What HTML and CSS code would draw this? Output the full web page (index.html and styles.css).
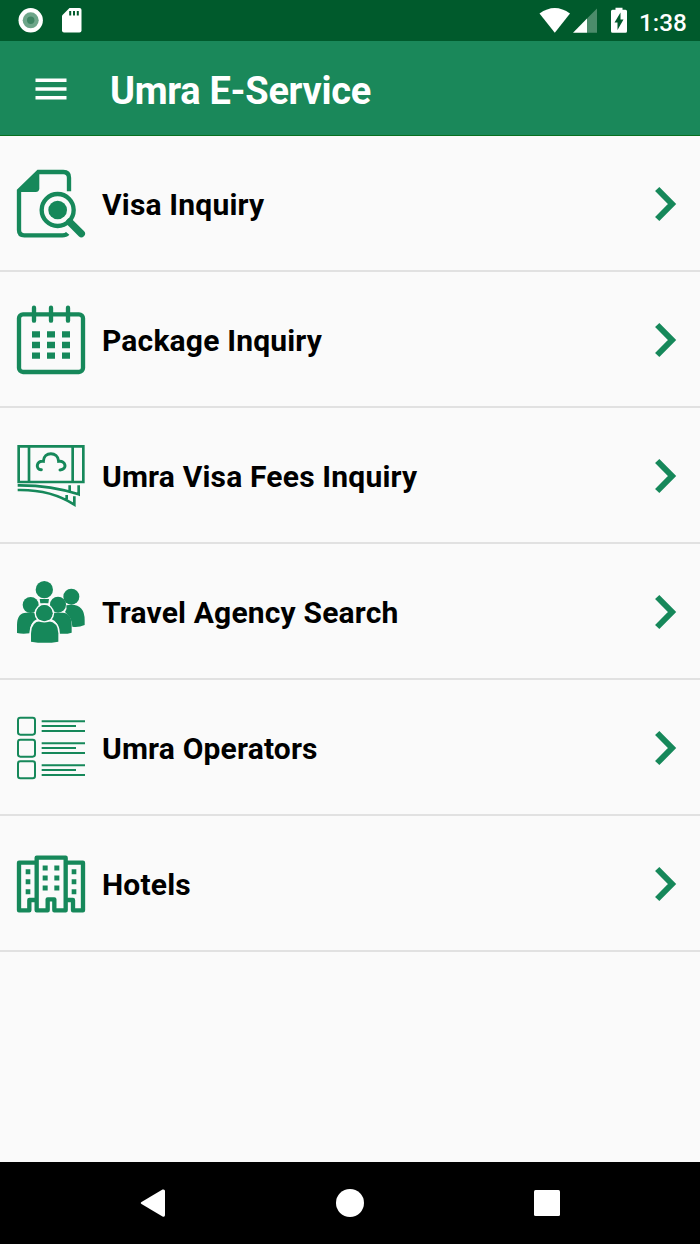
FILE: index.html
```html
<!DOCTYPE html>
<html lang="en">
<head>
<meta charset="utf-8">
<title>Umra E-Service</title>
<link rel="stylesheet" href="styles.css">
</head>
<body>
<div class="screen">
  <div class="status">
    <svg class="status-left" viewBox="0 0 100 41"><circle cx="30.7" cy="20.3" r="12.2" fill="#fff"/><circle cx="30.7" cy="20.3" r="8" fill="#6ea68a"/><circle cx="30.7" cy="20.3" r="3.7" fill="#3f8563"/><path fill="#fff" d="M69.5 8h10a2 2 0 0 1 2 2v20.500a2 2 0 0 1-2 2H64a2 2 0 0 1-2-2V15.500z"/><path stroke="#005a2c" stroke-width="2" d="M70.200 11v4.500M74 11v4.500M77.800 11v4.500"/></svg>
    <svg class="status-right" viewBox="530 0 100 41"><path fill="#fff" d="M539.500 13.500Q554.800 2.500 570 13.500L554.800 32.700z"/><path fill="#4c8c6b" d="M597 8.500V32.700h-10V18.500z"/><path fill="#fff" d="M587 18.500v14.200h-14z"/><path fill="#fff" d="M612.500 9.700h3V7.800h7v1.900h3q1.500 0 1.500 1.500v20q0 1.500-1.500 1.500h-13q-1.500 0-1.500-1.500v-20q0-1.500 1.500-1.500z"/><path fill="#005a2c" d="M620.500 12.500v7h3l-6 10.500v-7.500h-3z"/></svg>
    <span class="clock">1:38</span>
  </div>
  <header class="bar">
    <svg class="menu" viewBox="0 0 32 24"><path stroke="#fff" stroke-width="3.500" d="M.5 3.200h31M.5 12h31M.5 20.700h31"/></svg>
    <h1 class="title">Umra E-Service</h1>
  </header>
  <main class="list">
    <div class="row">
      <svg class="icon" viewBox="33 -3 210 300">
        <path class="thick" d="M192 109V68q0-17-17-17H100L42 107V225q0 16 16 16H172q11 0 16-6"/>
        <path class="fill" d="M97 47L38 106V111H92q11 0 11-11V47z"/>
        <circle class="thick" cx="158" cy="165" r="48"/><circle class="fill" cx="158" cy="165" r="28"/>
        <path class="handle" d="M194 201L229 236"/>
      </svg>
      <span class="label">Visa Inquiry</span>
      <svg class="chevron" viewBox="0 0 24 36"><path d="M3.200 3L18 18L3.200 33"/></svg>
    </div>
    <div class="row">
      <svg class="icon" viewBox="33 0 210 300">
        <rect class="thick" x="42" y="73" width="192" height="173" rx="12"/>
        <path class="thick round" d="M87 53V92M138 53V92M189 53V92"/>
        <path class="dash" d="M81 133h24M126 133h24M171 133h24M81 165h24M126 165h24M171 165h24M81 197h24M126 197h24M171 197h24"/>
      </svg>
      <span class="label">Package Inquiry</span>
      <svg class="chevron" viewBox="0 0 24 36"><path d="M3.200 3L18 18L3.200 33"/></svg>
    </div>
    <div class="row">
      <svg class="icon" viewBox="33 -12 210 300">
        <path class="mid" d="M41 49H235V156H41zM72 49V156M203 49V156"/>
        <path class="cloud" d="M109 119C91 120 93 91 115 94C116 64 159 64 161 94C183 91 188 119 165 120"/>
        <path class="mid" d="M38 166Q137 165 221 193V166M194 166V182M38 180Q137 178 208 224V199M185 195V208"/>
      </svg>
      <span class="label">Umra Visa Fees Inquiry</span>
      <svg class="chevron" viewBox="0 0 24 36"><path d="M3.200 3L18 18L3.200 33"/></svg>
    </div>
    <div class="row">
      <svg class="icon" viewBox="33 -24 210 300">
        <circle class="fill" cx="118" cy="59" r="26"/>
        <path class="fill" d="M104 87H132L130 100H106z"/>
        <circle class="fill" cx="199" cy="80" r="24"/>
        <path class="fill" d="M184 106Q239 96 239 151V165Q220 173 202 170Q201 142 180 126Q187 117 184 106z"/>
        <circle class="fill" cx="77" cy="105" r="24"/>
        <path class="fill" d="M36 189V164Q37 127 65 128H87Q96 132 98 146Q75 155 74 190Q52 193 36 189z"/>
        <circle class="fill" cx="159" cy="104" r="24"/>
        <path class="fill" d="M200 188V164Q199 127 171 128H148L138 146Q163 156 163 191Q184 193 200 188z"/>
        <circle class="cut" cx="118" cy="130" r="25"/>
        <path class="cut" d="M78 215V190Q79 155 106 154H130Q159 156 160 190V215Q120 222 78 215z"/>
        <circle class="fill" cx="118" cy="130" r="24"/>
        <path class="gap" d="M97 149Q118 162 139 149"/>
      </svg>
      <span class="label">Travel Agency Search</span>
      <svg class="chevron" viewBox="0 0 24 36"><path d="M3.200 3L18 18L3.200 33"/></svg>
    </div>
    <div class="row">
      <svg class="icon" viewBox="33 -21 210 300">
        <path class="thin" d="M110 49H240M110 63H213M110 78H240M110 115H240M110 129H213M110 144H240M110 181H240M110 195H213M110 210H240"/>
        <rect class="thin" x="39" y="38" width="51" height="51" rx="7"/><rect class="thin" x="39" y="104" width="51" height="51" rx="7"/><rect class="thin" x="39" y="169" width="51" height="51" rx="7"/>
      </svg>
      <span class="label">Umra Operators</span>
      <svg class="chevron" viewBox="0 0 24 36"><path d="M3.200 3L18 18L3.200 33"/></svg>
    </div>
    <div class="row">
      <svg class="icon" viewBox="33 -18 210 300">
        <path class="thick join" d="M95 68H42V211H73V180H90M182 68H234V211H204V180H187M95 211V53H182V211H148V178H128V211z"/>
        <path class="window" d="M62 95h14M62 125h14M62 155h14M113 84h15M113 114h15M113 144h15M148 84h15M148 114h15M148 144h15M200 95h14M200 125h14M200 155h14"/>
      </svg>
      <span class="label">Hotels</span>
      <svg class="chevron" viewBox="0 0 24 36"><path d="M3.200 3L18 18L3.200 33"/></svg>
    </div>
  </main>
  <nav class="nav">
    <svg viewBox="0 0 28 28"><path fill="#fff" d="M2.500 13L23.500.6Q26 0 26 2V26Q26 28.500 23.500 27.500L2.500 15Q1 14 2.500 13z"/></svg>
    <svg viewBox="0 0 28 28"><circle cx="14" cy="14" r="14" fill="#fff"/></svg>
    <svg viewBox="0 0 28 28"><rect x="1" y="1" width="26" height="26" rx="1.500" fill="#fff"/></svg>
  </nav>
</div>
</body>
</html>
```
FILE: styles.css
```css
* { box-sizing: border-box; }
body { margin: 0; font-family: Roboto, "Liberation Sans", sans-serif; }
svg { display: block; flex: none; fill: none; }
.screen { width: 700px; height: 1244px; display: flex; flex-direction: column; background: #fafafa; }
.status { height: 41px; background: #005a2c; display: flex; align-items: center; color: #fff; flex: none; }
.status-left { width: 100px; height: 41px; }
.status-right { width: 100px; height: 41px; margin-left: 430px; }
.clock { margin-left: 9px; padding-top: 3px; font-size: 24.3px; font-weight: 500; white-space: nowrap; }
.bar { height: 95px; flex: none; background: #1a885a; border-bottom: 1px solid #08701f; display: flex; align-items: center; padding: 2px 0 0 35px; }
.menu { width: 32px; height: 24px; }
.title { margin: 4px 0 0 43px; font-size: 38px; font-weight: 700; letter-spacing: -0.3px; color: #fff; white-space: nowrap; }
.list { flex: 1; }
.row { height: 136px; display: flex; align-items: center; padding: 0 22px 0 16px; border-bottom: 2px solid #e1e1e1; }
.icon { width: 70px; height: 100px; margin-top: 2px; }
.label { margin: 2px 0 0 16px; flex: 1; font-size: 30px; font-weight: 700; letter-spacing: 0.18px; color: #000; white-space: nowrap; }
.chevron { width: 24px; height: 36px; margin-top: 2px; }
.chevron path { stroke: #16885a; stroke-width: 6; }
.fill { fill: #16885a; }
.thick { stroke: #16885a; stroke-width: 13; }
.round { stroke-linecap: round; }
.join { stroke-linejoin: round; }
.handle { stroke: #16885a; stroke-width: 22; stroke-linecap: round; }
.dash { stroke: #16885a; stroke-width: 19; }
.window { stroke: #16885a; stroke-width: 15; }
.mid { stroke: #16885a; stroke-width: 8; }
.cloud { stroke: #16885a; stroke-width: 9; stroke-linecap: round; }
.thin { stroke: #16885a; stroke-width: 6; }
.cut { fill: #16885a; stroke: #fafafa; stroke-width: 9; paint-order: stroke; }
.gap { stroke: #fafafa; stroke-width: 4; }
.nav { height: 82px; flex: none; background: #000; display: flex; align-items: center; justify-content: center; gap: 169px; }
.nav svg { width: 28px; height: 28px; }
```
